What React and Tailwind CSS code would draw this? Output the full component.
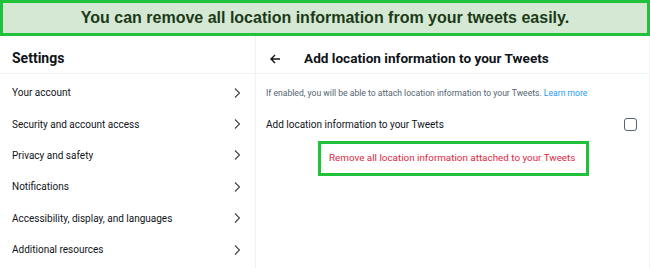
import React from "react";

const navItems = [
  "Your account",
  "Security and account access",
  "Privacy and safety",
  "Notifications",
  "Accessibility, display, and languages",
  "Additional resources",
];

function Chevron() {
  return (
    <svg width="10" height="12" viewBox="0 0 10 12" fill="none" stroke="#3f4449" strokeWidth="1.1">
      <path d="M3 1.5 L7.5 6 L3 10.5" />
    </svg>
  );
}

export default function App() {
  return (
    <div className="w-[650px] h-[268px] bg-white overflow-hidden font-['Roboto',sans-serif]">
      <div className="h-[36px] border-[3px] border-[#1fc23a] bg-[#d5e8d4] flex items-center justify-center">
        <p className="font-['Liberation_Sans',sans-serif] font-bold text-[16px] text-[#1b3a17]">
          You can remove all location information from your tweets easily.
        </p>
      </div>

      <div className="flex h-[232px]">
        {/* left settings column */}
        <div className="w-[256px] border-r border-[#eff3f4]">
          <div className="h-[38px] pt-[8px] border-b border-[#eff3f4] flex items-center px-3">
            <h2 className="text-[14px] font-bold text-[#0f1419]">Settings</h2>
          </div>
          <ul className="pt-[3px]">
            {navItems.map((item) => (
              <li key={item} className="h-[31.4px] flex items-center justify-between pl-3 pr-[13px]">
                <span className="text-[10px] text-[#0f1419]">{item}</span>
                <Chevron />
              </li>
            ))}
          </ul>
        </div>

        {/* right detail column */}
        <div className="flex-1 border-r border-[#eff3f4]">
          <div className="h-[38px] pt-[8px] border-b border-[#eff3f4] flex items-center pl-[14px]">
            <svg width="11" height="10" viewBox="0 0 11 10" fill="none" stroke="#0f1419" strokeWidth="1.4">
              <path d="M10 5 H1.5 M5 1 L1 5 L5 9" />
            </svg>
            <h2 className="ml-[23px] text-[13.6px] font-bold text-[#0f1419]">
              Add location information to your Tweets
            </h2>
          </div>
          <p className="px-[10px] pt-[13px] text-[8.6px] text-[#536471]">
            If enabled, you will be able to attach location information to your Tweets.{" "}
            <span className="text-[#1d9bf0]">Learn more</span>
          </p>
          <div className="flex items-center justify-between pl-[10px] pr-[12px] pt-[17px]">
            <span className="text-[10px] text-[#0f1419]">Add location information to your Tweets</span>
            <div className="w-[13px] h-[13px] border-[1.5px] border-[#536471] rounded-[3px]" />
          </div>
          <div className="flex pl-[62px] pt-[9px]">
            <div className="w-[271px] h-[35px] border-[3px] border-[#1fc23a] flex items-center pl-[8px]">
              <span className="whitespace-nowrap text-[9.85px] text-[#e0283f]">
                Remove all location information attached to your Tweets
              </span>
            </div>
          </div>
        </div>
      </div>
    </div>
  );
}
